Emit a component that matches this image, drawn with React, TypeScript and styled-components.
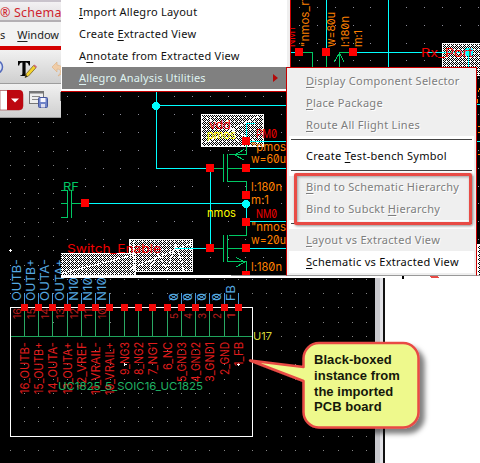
import React from "react";
import styled, { createGlobalStyle } from "styled-components";

const GlobalStyle = createGlobalStyle`
  body { margin: 0; background: #fff; overflow: hidden; }
`;

const UI_FONT = `"Noto Sans", "Open Sans", sans-serif`;

const Page = styled.main`
  position: relative;
  width: 480px;
  height: 463px;
  overflow: hidden;
  background: #fff;
  font-family: ${UI_FONT};
`;

const Canvas = styled.svg`
  position: absolute;
  inset: 0;
  display: block;
`;

const Label = styled.text`
  font-family: Inter, "Liberation Sans", sans-serif;
  font-feature-settings: "zero" 1;
  font-weight: 400;
`;

/* ---------- window chrome ---------- */

const Chrome = styled.header`
  position: relative;
  display: flex;
  flex-direction: column;
  width: 61px;
  height: 118px;
  overflow: hidden;
  white-space: nowrap;
`;

const TitleBar = styled.div`
  box-sizing: border-box;
  height: 22px;
  padding-top: 3px;
  border-top: 2px solid #c9c3cc;
  border-bottom: 2px solid #b4b0b4;
  background: linear-gradient(#f3f1f3, #dedcde);
  color: #cf1f2e;
  font-size: 12.5px;
  line-height: 16px;
  letter-spacing: 0.2px;
`;

const MenuBar = styled.div`
  box-sizing: border-box;
  display: flex;
  gap: 12px;
  height: 24px;
  padding-top: 4px;
  background: #f3f3f3;
  color: #222;
  font-size: 11px;
  line-height: 17px;
`;

const RedRule = styled.div`
  height: 4px;
  background: #d40000;
`;

const ToolStrip = styled.div`
  box-sizing: border-box;
  height: 34px;
  border-bottom: 1px solid #9d9d9d;
  background: linear-gradient(#f1f1f1, #cfcfcf);
`;

const Key = styled.span`
  text-decoration: underline;
  text-decoration-thickness: 1px;
  text-underline-offset: 2px;
  text-decoration-skip-ink: none;
`;

/* ---------- menus ---------- */

const Menu = styled.nav`
  position: absolute;
  left: 61px;
  top: 0;
  box-sizing: border-box;
  width: 230px;
  height: 92px;
  padding: 1px 3px 2px 1px;
  border-right: 1px solid #c80000;
  border-bottom: 1px solid #c80000;
  background: linear-gradient(90deg, #fff 226px, #efefef 226px);
`;

const MenuItem = styled.div<{ $active?: boolean }>`
  box-sizing: border-box;
  display: flex;
  align-items: center;
  justify-content: space-between;
  width: 225px;
  height: 22px;
  padding: 0 9px 0 17px;
  background: ${(p) => (p.$active ? "#808080" : "#fff")};
  color: ${(p) => (p.$active ? "#dff3f1" : "#111")};
  font-size: 11px;
  line-height: 24px;
  letter-spacing: ${(p) => (p.$active ? "0.14px" : "0.24px")};
  white-space: nowrap;
`;

const SubMenu = styled.nav`
  position: absolute;
  left: 286px;
  top: 67px;
  box-sizing: border-box;
  width: 191px;
  height: 209px;
  padding: 2px;
  border: 1px solid #c80000;
  border-bottom-color: #999;
  background: #efefef;
`;

const SubItem = styled.div<{ $disabled?: boolean }>`
  box-sizing: border-box;
  height: 22px;
  padding-left: 17px;
  background: ${(p) => (p.$disabled ? "#efefef" : "#fff")};
  color: ${(p) => (p.$disabled ? "#7d7d7d" : "#0a0a0a")};
  text-shadow: ${(p) => (p.$disabled ? "1px 1px 0 #fff" : "none")};
  font-size: 11px;
  line-height: 22px;
  letter-spacing: 0.29px;
  white-space: nowrap;
`;

const Separator = styled.div`
  display: flex;
  align-items: center;
  height: 9px;
  padding: 0 2px;
  background: #fff;

  &::before {
    content: "";
    flex: 1;
    height: 1px;
    margin-bottom: 2px;
    background: #444;
  }
`;

const Highlight = styled.div`
  position: absolute;
  left: 294px;
  top: 173px;
  box-sizing: border-box;
  width: 178px;
  height: 52px;
  border: 3px solid #e84b45;
  border-radius: 2px;
  box-shadow: 1px 1px 3px rgba(0, 0, 0, 0.45), inset 1px 1px 3px rgba(0, 0, 0, 0.35);
`;

const Note = styled.p`
  position: absolute;
  left: 314px;
  top: 352px;
  margin: 0;
  color: #15180a;
  font: bold 13px/15.8px "Liberation Sans", Arial, sans-serif;
  letter-spacing: 0.05px;
  white-space: nowrap;
`;

/* ---------- schematic data ---------- */

const PITCH = 14.27;
const pinX = (i: number) => Math.floor(24.3 + i * PITCH) + 0.5;

const pins: { name: string; len: number; net?: string; netLen?: number }[] = [
  { name: "16_OUTB-", len: 52, net: "OUTB-", netLen: 42 },
  { name: "15_OUTB+", len: 52, net: "OUTB+", netLen: 42 },
  { name: "14_OUTA-", len: 52, net: "OUTA-", netLen: 42 },
  { name: "13_OUTA+", len: 52, net: "OUTA+", netLen: 42 },
  { name: "12_VREF", len: 47, net: "N105", netLen: 32 },
  { name: "11_VRAIL-", len: 53, net: "N105", netLen: 32 },
  { name: "10_VRAIL+", len: 53, net: "N105", netLen: 32 },
  { name: "9_NG3", len: 33 },
  { name: "8_NG2", len: 33 },
  { name: "7_NG1", len: 33 },
  { name: "6_NC", len: 28 },
  { name: "5_GND3", len: 40, net: "0", netLen: 8 },
  { name: "4_GND2", len: 40, net: "0", netLen: 8 },
  { name: "3_GND1", len: 40, net: "0", netLen: 8 },
  { name: "2_GND", len: 33, net: "0", netLen: 8 },
  { name: "1_FB", len: 24, net: "FB", netLen: 16 },
];

type T = [string, number, number, number, string];
const RED = "#f00000";
const ORANGE = "#ff8000";
const GREEN = "#00c864";
const CYAN = "#00ffff";

const labels: T[] = [
  ["vdd", 209, 129, 22, RED],
  ["pmos", 207, 139, 29, "#ffff00"],
  ["PM0", 256, 138, 21, RED],
  ['"pmos', 251, 151, 35, ORANGE],
  ["w=60u", 251, 163, 35, ORANGE],
  ["l:180n", 251, 191, 31, ORANGE],
  ["m:1", 251, 204, 18, ORANGE],
  ["nmos", 207, 217, 29, "#ffff00"],
  ["NM0", 256, 218, 21, RED],
  ['"nmos', 251, 231, 35, ORANGE],
  ["w=20u", 251, 244, 35, ORANGE],
  ["l:180n", 251, 271, 31, ORANGE],
  ["Switch_Enable", 67, 253, 94, RED],
  ["Rx_Port", 421, 57, 52, RED],
  ["RF", 63, 191, 16, GREEN],
];

const upLabels: T[] = [
  ["NM1", 295, 47, 20, RED],
  ['"nmos_rf', 309, 47, 50, ORANGE],
  ["w=80u", 335, 47, 35, ORANGE],
  ["l:180n", 349, 47, 31, ORANGE],
  ["m:1", 362, 47, 17, ORANGE],
];

const squares: [number, number][] = [
  [299, 52], [326, 52], [353, 52], [210, 168], [246, 141], [246, 168],
  [246, 195], [246, 222], [210, 248], [246, 248], [246, 275], [85, 203],
];

function Dots({ x0, y0, step, w, h, fill }: { x0: number; y0: number; step: number; w: number; h: number; fill: string }) {
  const out: React.ReactElement[] = [];
  for (let y = y0; y < h; y += step)
    for (let x = x0; x < w; x += step)
      out.push(<rect key={`${x}-${y}`} x={Math.floor(x)} y={Math.floor(y)} width="1" height="1" fill={fill} />);
  return <g>{out}</g>;
}

function Schematic() {
  return (
    <Canvas width="480" height="463" viewBox="0 0 480 463">
      <defs>
        <pattern id="hatch" width="4" height="4" patternUnits="userSpaceOnUse">
          <rect width="4" height="4" fill="#000" />
          <path d="M0 0h1v1h-1zM2 0h1v1h-1zM1 1h1v1h-1zM3 1h1v1h-1zM0 2h1v1h-1zM2 2h1v1h-1zM1 3h1v1h-1zM3 3h1v1h-1zM2 1h1v1h-1z" fill="#fff" shapeRendering="crispEdges" />
        </pattern>
        <clipPath id="upper"><rect x="61" y="0" width="419" height="275" /></clipPath>
      </defs>

      {/* board view */}
      <g shapeRendering="crispEdges">
        <rect y="118" width="375" height="345" fill="#000" />
        <Dots x0={10.4} y0={122.5} step={14.25} w={375} h={463} fill="#858585" />
        <rect x="375" y="277" width="9" height="186" fill="#c9c9ce" />
        <rect x="380" y="277" width="3" height="186" fill="#e2e2e6" />
        <rect x="383" y="277" width="2" height="186" fill="#111" />
        <path d="M9 250.5h3M10.5 249v3M124 364.500h3M124.500 363v3M237 364.500h3M238.500 363v3" stroke="#fff" />
        <path d="M10 336.500H252" stroke="#1fa45c" />
        {pins.map((p, i) => (
          <g key={p.name}>
            <path d={`M${pinX(i)} 311V336`} stroke="#2aa863" />
            {p.net && <path d={`M${pinX(i)} 293V304`} stroke="#4a9ad4" />}
          </g>
        ))}
        <rect x="10.5" y="307.500" width="242" height="129" fill="none" stroke="#fff" />
        {pins.map((p, i) => <rect key={p.name} x={pinX(i) - 3.5} y="304" width="7" height="7" fill="#f00808" />)}
      </g>
      {pins.map((p, i) => (
        <g key={p.name} fontSize="11">
          <Label transform={`translate(${pinX(i) + 4} 342) rotate(-90)`} textAnchor="end" textLength={p.len} lengthAdjust="spacingAndGlyphs" fontSize="11.5" fill="#e01c1c">{p.name}</Label>
          {(i < 7 || i > 10) && (
            <Label transform={`translate(${pinX(i) - 3.5} 319) rotate(-90)`} textLength={i < 7 ? 11 : 6} lengthAdjust="spacingAndGlyphs" fill="#b81c1c">{16 - i}</Label>
          )}
          {p.net && (
            <Label transform={`translate(${pinX(i) - 3.5} 301) rotate(-90)`} textLength={p.netLen} lengthAdjust="spacingAndGlyphs" fontSize="12" fill="#55a8e0">{p.net}</Label>
          )}
        </g>
      ))}
      {pins.map((p, i) => p.net === "0" && <path key={p.name} d={`M${pinX(i) - 12} 300L${pinX(i) - 3} 293.500`} stroke="#55a8e0" />)}
      <Label x="58" y="390" fontSize="11" textLength="145" lengthAdjust="spacingAndGlyphs" fill="#20b264">UC1825_5_SOIC16_UC1825</Label>
      <Label x="253" y="340" fontSize="11" textLength="19" lengthAdjust="spacingAndGlyphs" fill="#d4d838">U17</Label>

      {/* circuit view */}
      <g clipPath="url(#upper)">
        <g shapeRendering="crispEdges">
          <rect x="61" width="419" height="275" fill="#000" />
          <Dots x0={67.3} y0={7.4} step={17.86} w={480} h={275} fill="#8d8d9a" />
          {[[201, 114, 63, 33], [129, 239, 64, 33], [60, 253, 76, 24], [442, 43, 63, 33], [477, 244, 20, 33]].map(([x, y, w, h]) => (
            <rect key={`${x}`} x={x + 0.5} y={y + 0.5} width={w - 1} height={h - 1} fill="url(#hatch)" stroke="#fff" />
          ))}
          <path d="M61 273.500L133 255M133 241v31M130 269L192 243M150 268l8-14l9 16l9-26l8 27M205 117l54 26M205 143l54-27M226 117l12 25" stroke="#fff" fill="none" />
          <path
            d="M156.500 92V168.500H206M156.500 105.500H286M210.500 172V244M246.500 138V123.500H255M250 141.500H286M250 168.500H286M89 203.500H246M246.500 204V218M250 221.500H286M175 248.500H206M250 248.500H286M326.500 0V48M388.500 0V67M357 52.500H470M291 52.500H295M468.500 52V67M477 104.500h3M477 141.500h3"
            stroke={CYAN} fill="none"
          />
          <path
            d="M246.500 145V154.500H228.500M227.500 154V181.500H246.500V191M223.500 154V182M214 168.500H223M228 168.500H242M246.500 226V235.500H228.500M227.500 235V261.500H246.500V271M223.500 235V262M214 248.500H223M228 248.500H242M61 190.500H67.500V217.500H61M61 203.500H67M71.500 190V218M72 203.500H81M303 52.500H312.500V67M326.500 56V67M349 52.500H339.500V67"
            stroke={GREEN} fill="none"
          />
          <path d="M244 149.500L235 155L244 160M236 257.500L245 262L236 267M334 62L339.500 53L344 62" stroke={GREEN} fill="none" />
          {squares.map(([x, y]) => <rect key={`${x}-${y}`} x={x - 4} y={y - 4} width="8" height="8" fill="#ff0000" />)}
          <circle cx="156" cy="106" r="4" fill={CYAN} />
          <circle cx="246" cy="204" r="4.200" fill={CYAN} />
          <circle cx="469" cy="52" r="4.500" fill={CYAN} />
          <path d="M477.500 99v4M478 126h2v6h-2M478 154h2v6M478 92l2-4" stroke={ORANGE} fill="none" />
        </g>
        {labels.map(([t, x, y, len, fill]) => (
          <Label key={`${t}${y}`} x={x} y={y} fontSize={t.length > 6 ? 12 : 11.5} textLength={len} lengthAdjust="spacingAndGlyphs" fill={fill}>{t}</Label>
        ))}
        {upLabels.map(([t, x, y, len, fill]) => (
          <Label key={t} transform={`translate(${x} ${y}) rotate(-90)`} fontSize="11" textLength={len} lengthAdjust="spacingAndGlyphs" fill={fill}>{t}</Label>
        ))}
      </g>
      <g shapeRendering="crispEdges">
        <rect x="61" y="275" width="419" height="3" fill="#fff" />
        <rect x="231" y="275" width="249" height="1" fill="#999" />
        <path d="M403 276v3" stroke="#000" strokeWidth="2" />
        <path d="M429 276h8l2 2h-7z" fill="#e84b45" />
      </g>
    </Canvas>
  );
}

function TextIcons() {
  return (
    <svg width="61" height="33" viewBox="0 50 61 33" display="block">
      <circle cx="-4" cy="67" r="6.500" fill="#dce3f5" stroke="#5269bb" strokeWidth="1.500" />
      <path d="M18 61h12v4.500h-1.200c-.3-2-1-3-3.200-3v11c0 1.400.6 1.700 2 1.800v.7h-7.200v-.7c1.400-.1 2-.4 2-1.800v-11c-2.200 0-2.900 1-3.200 3H18z" fill="#050505" />
      <path d="M25 77.500l1.500-4L33.500 65.500l2.500 2.200l-7.500 8.300z" fill="#f4d32b" stroke="#76622c" strokeWidth=".8" />
      <path d="M33.500 65.500l1-1l2.500 2.200l-1 1.200z" fill="#d06c7c" />
      <path d="M25 77.500l1-2.600l1.600 1.500z" fill="#222" />
      <path d="M57 62l-5 5l5 5v-3c4 0 5 3 1 7c7-3 7-10-1-11z" fill="#f0cda8" stroke="#dcae80" strokeWidth=".6" />
    </svg>
  );
}

function ComboIcons() {
  return (
    <svg width="61" height="33" viewBox="0 84 61 33" display="block">
      <path d="M0 90.500H19a4 4 0 0 1 4 4V106a4 4 0 0 1-4 4H0z" fill="#fff" stroke="#a66" strokeWidth=".8" />
      <path d="M7 90H19a4 4 0 0 1 4 4V106a4 4 0 0 1-4 4H7z" fill="#bd0710" />
      <path d="M11 98.500h8l-4 4z" fill="#fff" />
      <rect x="29.500" y="91.500" width="14" height="12" fill="#eee" stroke="#777" />
      <path d="M29 92.500h15" stroke="#777" strokeWidth="2" />
      <path d="M32 96.500h8M32 99.500h8" stroke="#888" />
      <rect x="38.500" y="97.500" width="9" height="10" rx="1" fill="#6f83c9" stroke="#46579d" />
      <rect x="40.500" y="98" width="5" height="4" fill="#f6f6ff" />
      <rect x="41" y="104" width="4" height="3.500" fill="#dde" />
      <rect x="60" y="92" width="2" height="9" fill="#777" />
    </svg>
  );
}

function Callout() {
  const d = "M319 343H403A15.500 15.500 0 0 1 418.500 358.500V412A15.500 15.500 0 0 1 403 427.500H319A15.500 15.500 0 0 1 303.500 412V381L250 360.500L303.500 367V358.500A15.500 15.500 0 0 1 319 343Z";
  return (
    <>
      <Canvas width="480" height="463" viewBox="0 0 480 463">
        <defs>
          <filter id="drop" x="-10%" y="-10%" width="125%" height="130%">
            <feDropShadow dx="5" dy="5" stdDeviation="2.500" floodColor="#000" floodOpacity=".5" />
          </filter>
        </defs>
        <path d={d} fill="#eef98c" stroke="#e84b45" strokeWidth="2.500" strokeLinejoin="round" filter="url(#drop)" />
      </Canvas>
      <Note>
        Black-boxed<br />instance from<br />the imported<br />PCB board
      </Note>
    </>
  );
}

export default function App() {
  return (
    <Page>
      <GlobalStyle />
      <Schematic />
      <Chrome>
        <TitleBar>® Schema</TitleBar>
        <MenuBar>
          <span>s</span>
          <span><Key>W</Key>indow</span>
        </MenuBar>
        <RedRule />
        <ToolStrip><TextIcons /></ToolStrip>
        <ToolStrip><ComboIcons /></ToolStrip>
      </Chrome>
      <Menu>
        <MenuItem><span><Key>I</Key>mport Allegro Layout</span></MenuItem>
        <MenuItem><span>Create <Key>E</Key>xtracted View</span></MenuItem>
        <MenuItem><span>A<Key>n</Key>notate from Extracted View</span></MenuItem>
        <MenuItem $active>
          <span><Key>A</Key>llegro Analysis Utilities</span>
          <svg width="5" height="8" viewBox="0 0 5 8"><path d="M0 0L5 4L0 8z" fill="#b30b0b" /></svg>
        </MenuItem>
      </Menu>
      <SubMenu>
        <SubItem $disabled><Key>D</Key>isplay Component Selector</SubItem>
        <SubItem $disabled><Key>P</Key>lace Package</SubItem>
        <SubItem $disabled><Key>R</Key>oute All Flight Lines</SubItem>
        <Separator />
        <SubItem>Create <Key>T</Key>est-bench Symbol</SubItem>
        <Separator />
        <SubItem $disabled><Key>B</Key>ind to Schematic Hierarchy</SubItem>
        <SubItem $disabled>Bind to Subckt <Key>H</Key>ierarchy</SubItem>
        <Separator />
        <SubItem $disabled><Key>L</Key>ayout vs Extracted View</SubItem>
        <SubItem><Key>S</Key>chematic vs Extracted View</SubItem>
      </SubMenu>
      <Highlight />
      <Callout />
    </Page>
  );
}
